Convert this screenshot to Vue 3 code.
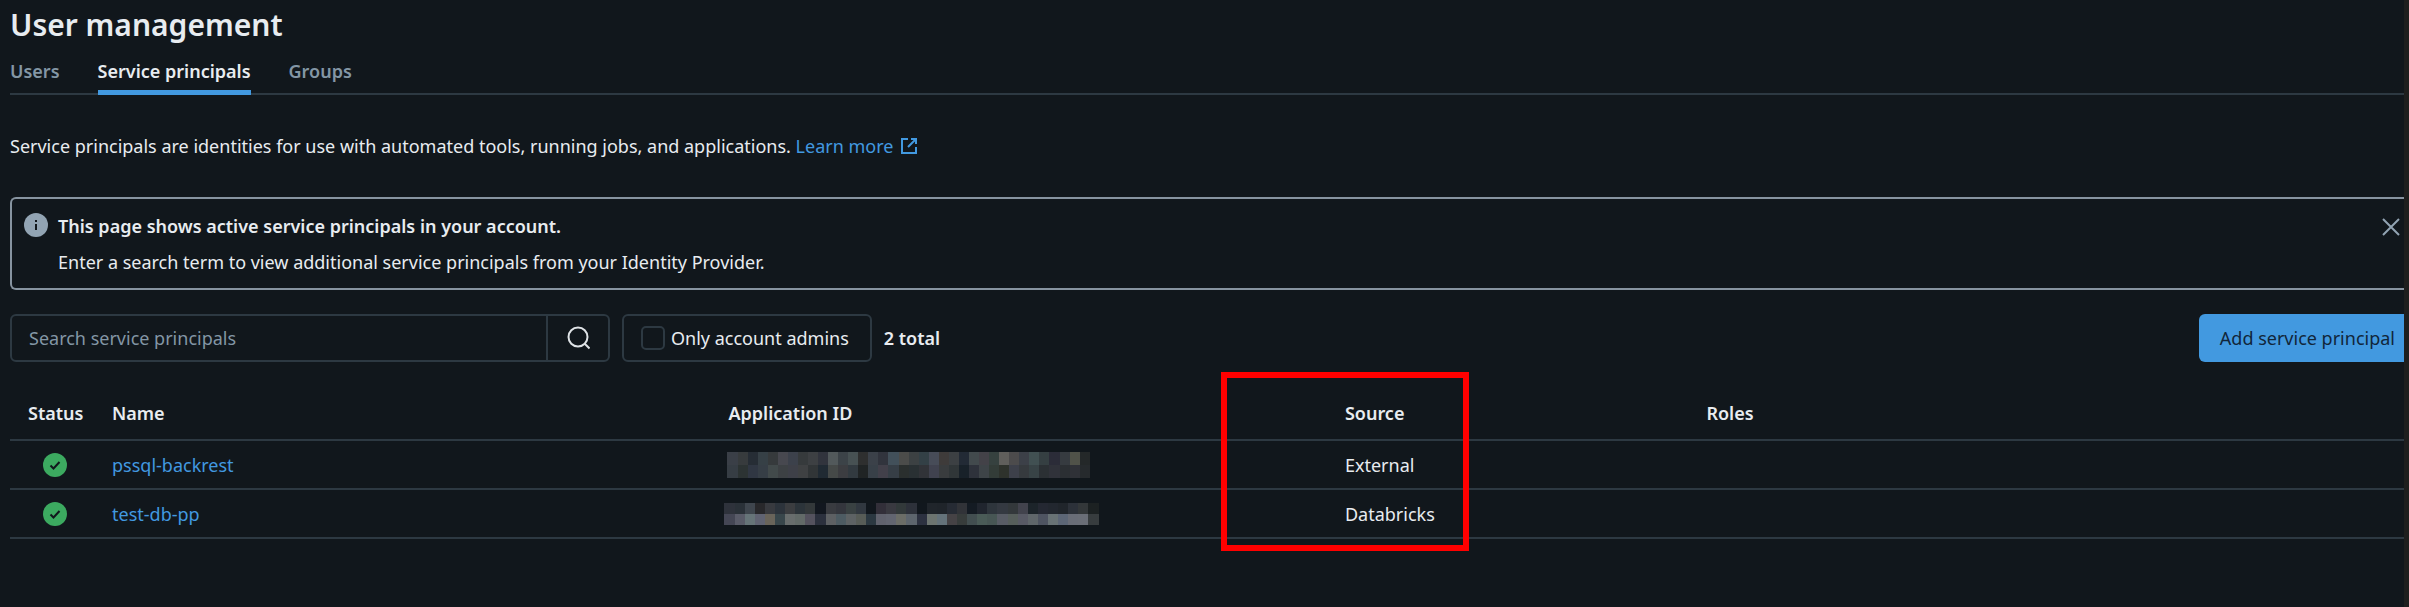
<script setup>
import { ref } from 'vue'

const tabs = [
  { label: 'Users', active: false },
  { label: 'Service principals', active: true },
  { label: 'Groups', active: false },
]

const search = ref('')
const adminsOnly = ref(false)

const principals = [
  {
    name: 'pssql-backrest',
    source: 'External',
    tiles: [
      '3a3f47 373b3d 262d35 364046 363a3c 47484f 3c414b 363a3c 3d4043 31343d 52595b 3c4348 475153 2e2f2f 3b4149 31343d 42505a 4b4c4a 3c4143 334046 474c58 3e3b3a 3c4043 222a35 424a4d 434248 36413f 605f5c 4c4b4c 3c4048 415052 353f42 2b2c38 363b40 505249 242829',
      '363d44 2c3333 303743 363e46 424a4b 3d4144 3e4048 3f4143 313537 202a33 454948 3c3d41 323a40 202425 384048 42404a 363e46 2a2f2e 293033 313338 40424f 393c3e 303638 182129 2e323b 3e4448 333c38 2e322c 3d404a 363a3e 384346 2b3034 30323a 2b2f33 2f3137 262a2d',
    ],
  },
  {
    name: 'test-db-pp',
    source: 'Databricks',
    tiles: [
      '2e323b 2a3138 3f464e 28282b 383a3f 2c333b 3b3d40 2c343a 33383a 12171f 393b40 34363d 394142 313840 11171d 322f39 393940 32393a 2d313a 11171d 20252b 1f242a 262b34 313338 141b23 20252e 2e353c 343941 33383b 42434d 1c242a 242832 22272f 20252b 2c3139 333739 1c2122',
      '444654 595b68 667478 606372 69645a 38464b 686d6d 626a68 54525e 2b303d 5d6063 4d5b62 5d6264 575c57 2b3841 60626d 626570 6b6d67 5d656d 2c3140 6c7470 64727a 454245 373c3b 424e50 4a5b57 475654 585c65 565e5b 585a65 5f666a 4e5461 687275 5c6676 696d77 6a6e77 373c3e',
    ],
  },
].map((p) => ({ ...p, tiles: p.tiles.map((row) => row.split(' ').map((c) => '#' + c)) }))
</script>

<template>
  <main class="page">
    <h1>User management</h1>

    <nav class="tabs">
      <a v-for="t in tabs" :key="t.label" href="#" class="tab" :class="{ active: t.active }">{{ t.label }}</a>
    </nav>

    <p class="intro">
      Service principals are identities for use with automated tools, running jobs, and applications.
      <a href="#">Learn more
        <svg class="external" viewBox="0 0 18 18" aria-hidden="true">
          <path d="M8 2H2v14h14v-6M11 2h5v5M16 2L8 10" />
        </svg>
      </a>
    </p>

    <section class="alert">
      <svg class="badge" viewBox="0 0 24 24" aria-hidden="true">
        <circle cx="12" cy="12" r="12" fill="#92a4b3" />
        <path d="M11 7h2v2h-2zM11 11h2v6h-2z" fill="#11171c" />
      </svg>
      <div class="alert-text">
        <strong>This page shows active service principals in your account.</strong>
        <span>Enter a search term to view additional service principals from your Identity Provider.</span>
      </div>
      <button class="close" type="button" aria-label="Close">
        <svg viewBox="0 0 18 18" aria-hidden="true"><path d="M1 1l16 16M17 1L1 17" /></svg>
      </button>
    </section>

    <div class="toolbar">
      <form class="search" @submit.prevent>
        <input v-model="search" type="text" placeholder="Search service principals" aria-label="Search service principals" />
        <button type="submit" aria-label="Search">
          <svg viewBox="0 0 24 24" aria-hidden="true"><circle cx="12" cy="11" r="9.5" /><path d="M18.5 17.5l5 5" /></svg>
        </button>
      </form>
      <label class="filter">
        <input v-model="adminsOnly" type="checkbox" />
        Only account admins
      </label>
      <strong class="total">2 total</strong>
      <button class="add" type="button">Add service principal</button>
    </div>

    <table>
      <colgroup>
        <col class="c-status" /><col class="c-wide" /><col class="c-wide" /><col class="c-source" /><col />
      </colgroup>
      <thead>
        <tr>
          <th>Status</th>
          <th>Name</th>
          <th>Application ID</th>
          <th class="source">Source<span class="highlight"></span></th>
          <th>Roles</th>
        </tr>
      </thead>
      <tbody>
        <tr v-for="p in principals" :key="p.name">
          <td class="status">
            <svg class="badge" viewBox="0 0 24 24" role="img" aria-label="Active">
              <circle cx="12" cy="12" r="12" fill="#3caa60" />
              <path d="M7.5 12.5l3 3 6-6.500" fill="none" stroke="#11171c" stroke-width="2" />
            </svg>
          </td>
          <td><a href="#">{{ p.name }}</a></td>
          <td>
            <div class="mosaic" :class="{ low: p.source === 'Databricks' }">
              <div v-for="(row, i) in p.tiles" :key="i" class="mosaic-row">
                <i v-for="(c, j) in row" :key="j" :style="{ background: c }"></i>
              </div>
            </div>
          </td>
          <td>{{ p.source }}</td>
          <td></td>
        </tr>
      </tbody>
    </table>
  </main>
</template>

<style>
body {
  background: #11171c;
}
</style>

<style scoped>
.page {
  box-sizing: border-box;
  min-height: 100vh;
  padding: 4px 0 0 10px;
  border-right: 5px solid #1e1f1e;
  background: #11171c;
  color: #e8ecf0;
  font: 18px/28px "Noto Sans", "Open Sans", sans-serif;
  overflow: hidden;
}
input,
button {
  font: inherit;
  color: inherit;
  margin: 0;
}
a {
  color: #4299e0;
  text-decoration: none;
}
strong,
th {
  font-weight: 600;
}
h1 {
  margin: 0;
  font-size: 30px;
  line-height: 42px;
  font-weight: 600;
}
.tabs {
  display: flex;
  gap: 38px;
  margin-top: 10px;
  border-bottom: 2px solid #2d3942;
}
.tab {
  height: 37px;
  line-height: 30px;
  font-weight: 600;
  color: #8396a5;
}
.tab.active {
  color: #e8ecf0;
  border-bottom: 5px solid #4299e0;
  height: 34px;
  margin-bottom: -2px;
}
.intro {
  margin: 37px 0 0;
}
.external {
  width: 18px;
  height: 18px;
  margin-left: 2px;
  vertical-align: -2px;
  fill: none;
  stroke: #4299e0;
  stroke-width: 2;
}
.alert {
  display: flex;
  align-items: flex-start;
  margin-top: 37px;
  padding: 13px 4px 12px 12px;
  border: 2px solid #8794a0;
  border-right: 0;
  border-radius: 6px 0 0 6px;
}
.badge {
  display: block;
  width: 24px;
  height: 24px;
}
.alert .badge {
  margin-top: 1px;
}
.alert-text {
  display: flex;
  flex: 1;
  flex-direction: column;
  gap: 8px;
  margin-left: 10px;
}
.close {
  display: flex;
  padding: 6px 0;
  border: 0;
  background: none;
}
.close svg {
  width: 18px;
  height: 18px;
  stroke: #92a4b3;
  stroke-width: 2;
}
.toolbar {
  display: flex;
  align-items: center;
  gap: 12px;
  height: 48px;
  margin-top: 24px;
}
.search {
  display: flex;
  box-sizing: border-box;
  width: 600px;
  height: 48px;
  border: 2px solid #2d3942;
  border-radius: 6px;
}
.search input {
  flex: 1;
  min-width: 0;
  padding: 0 17px;
  border: 0;
  background: none;
  outline: 0;
}
.search input::placeholder {
  color: #8396a5;
  opacity: 1;
}
.search button {
  display: flex;
  align-items: center;
  justify-content: center;
  width: 62px;
  padding: 0;
  border: 0;
  border-left: 2px solid #2d3942;
  background: none;
}
.search svg {
  width: 24px;
  height: 24px;
  fill: none;
  stroke: #dfe3e6;
  stroke-width: 2;
}
.filter {
  display: flex;
  align-items: center;
  gap: 6px;
  box-sizing: border-box;
  height: 48px;
  padding: 0 21px 0 17px;
  border: 2px solid #2d3942;
  border-radius: 6px;
}
.filter input {
  appearance: none;
  box-sizing: border-box;
  width: 24px;
  height: 24px;
  border: 2px solid #2d3942;
  border-radius: 5px;
}
.add {
  height: 48px;
  margin-left: auto;
  padding: 0 9px 0 21px;
  border: 0;
  border-radius: 6px 0 0 6px;
  background: #4299e0;
  color: #11263a;
}
table {
  width: 100%;
  margin-top: 24px;
  table-layout: fixed;
  border-collapse: separate;
  border-spacing: 0;
}
.c-status {
  width: 84px;
}
.c-wide {
  width: 25.75%;
}
.c-source {
  width: 15.1%;
}
th,
td {
  box-sizing: border-box;
  padding: 0 0 0 18px;
  border-bottom: 2px solid #2d3942;
  text-align: left;
  white-space: nowrap;
}
th {
  height: 55px;
}
td {
  height: 49px;
}
.status {
  padding-left: 33px;
}
.source {
  position: relative;
}
.highlight {
  position: absolute;
  top: -14px;
  left: -106px;
  box-sizing: border-box;
  width: 248px;
  height: 179px;
  border: 6px solid #ff0000;
}
.mosaic {
  width: 362px;
  margin-left: -1px;
}
.mosaic-row {
  display: flex;
  height: 13px;
}
.mosaic.low {
  width: 374px;
  margin-left: -4px;
}
.low .mosaic-row {
  height: 11px;
}
.mosaic i {
  flex: 1;
}
</style>
